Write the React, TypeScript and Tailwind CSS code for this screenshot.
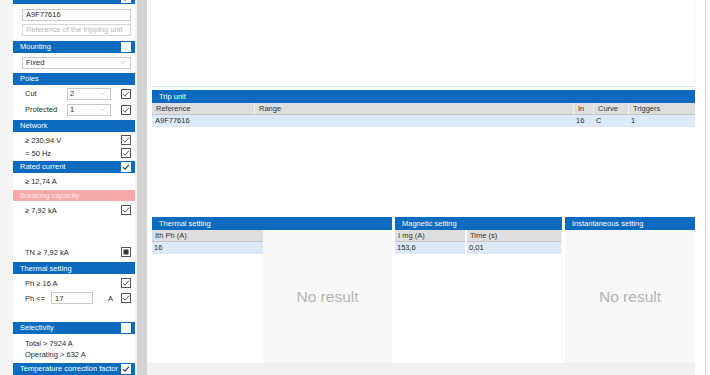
import React from "react";

const FONT = { fontFamily: '"Liberation Sans", Arial, sans-serif' };

function RowCheck({ mark = "check" }: { mark?: "check" | "square" }) {
  return (
    <svg width="10" height="10" viewBox="0 0 10 10" className="shrink-0">
      <rect x="0.5" y="0.5" width="9" height="9" fill="#fff" stroke="#555" />
      {mark === "check" ? (
        <path d="M2 5.2 L4 7.2 L8 2.6" fill="none" stroke="#555" strokeWidth="1" />
      ) : (
        <rect x="2.5" y="2.5" width="5" height="5" fill="#333" />
      )}
    </svg>
  );
}

function HeadCheck({ checked }: { checked?: boolean }) {
  return (
    <svg width="10" height="10" viewBox="0 0 10 10" className="shrink-0">
      <rect x="0" y="0" width="10" height="10" fill="#fff" />
      {checked && <path d="M2 5.2 L4 7.2 L8 2.6" fill="none" stroke="#333" strokeWidth="1.1" />}
    </svg>
  );
}

function Header({
  title,
  check,
  pink,
  className = "",
}: {
  title: string;
  check?: "on" | "off";
  pink?: boolean;
  className?: string;
}) {
  return (
    <div
      className={
        "h-[12px] flex items-center justify-between pl-[7px] pr-[4px] text-[7.5px] leading-none " +
        (pink ? "bg-[#f6a9a9] text-[#fde8e8] " : "bg-[#0b6cbf] text-white ") +
        className
      }
    >
      <span>{title}</span>
      {check && <HeadCheck checked={check === "on"} />}
    </div>
  );
}

function Row({
  children,
  check,
  className = "",
}: {
  children: React.ReactNode;
  check?: "check" | "square";
  className?: string;
}) {
  return (
    <div className={"h-[12px] flex items-center justify-between pl-[12px] pr-[4px] text-[7.5px] text-[#2a2a2a] " + className}>
      <span>{children}</span>
      {check && <RowCheck mark={check} />}
    </div>
  );
}

function Chevron() {
  return (
    <svg width="5" height="3" viewBox="0 0 5 3" className="shrink-0">
      <path d="M0.5 0.5 L2.5 2.5 L4.5 0.5" fill="none" stroke="#bbb" strokeWidth="0.8" />
    </svg>
  );
}

function SelectRow({ label, value }: { label: string; value: string }) {
  return (
    <div className="h-[12px] flex items-center pl-[12px] pr-[4px] text-[7.5px] text-[#2a2a2a]">
      <span className="w-[42px]">{label}</span>
      <div className="w-[44px] h-[12px] border border-[#c9c9c9] bg-white flex items-center justify-between pl-[2px] pr-[5px]">
        <span>{value}</span>
        <Chevron />
      </div>
      <div className="flex-1" />
      <RowCheck />
    </div>
  );
}

function Sidebar() {
  return (
    <div className="w-[137px] h-full bg-[#f4f4f4] pl-[13px] pr-[2px] overflow-hidden">
      <div className="w-[122px] h-full bg-white flex flex-col">
        <Header title="Reference" check="on" className="-mt-[8px]" />
        <div className="mt-[5px] ml-[9px] w-[109px] h-[12px] border border-[#c9c9c9] flex items-center pl-[3px] text-[7.5px] text-[#2a2a2a]">
          A9F77616
        </div>
        <div className="mt-[3px] ml-[9px] w-[109px] h-[12px] border border-[#d6d6d6] flex items-center pl-[3px] text-[7.5px] text-[#b8b8b8]">
          Reference of the tripping unit
        </div>
        <Header title="Mounting" check="off" className="mt-[5px]" />
        <div className="mt-[4px] ml-[9px] w-[109px] h-[12px] border border-[#c9c9c9] flex items-center justify-between pl-[3px] pr-[5px] text-[7.5px] text-[#2a2a2a]">
          <span>Fixed</span>
          <Chevron />
        </div>
        <Header title="Poles" className="mt-[4px]" />
        <div className="mt-[3px]">
          <SelectRow label="Cut" value="2" />
        </div>
        <div className="mt-[4px]">
          <SelectRow label="Protected" value="1" />
        </div>
        <Header title="Network" className="mt-[4px]" />
        <Row check="check" className="mt-[2px] h-[13px]">≥ 230,94 V</Row>
        <Row check="check" className="h-[13px]">= 50 Hz</Row>
        <Header title="Rated current" check="on" className="mt-[1px]" />
        <Row className="mt-[3px]">≥ 12,74 A</Row>
        <Header title="Breaking capacity" pink className="mt-[2px]" />
        <Row check="check" className="mt-[3px]">≥ 7,92 kA</Row>
        <Row check="square" className="mt-[30px]">TN ≥ 7,92 kA</Row>
        <Header title="Thermal setting" className="mt-[4px]" />
        <Row check="check" className="mt-[3px]">Ph ≥ 16 A</Row>
        <div className="mt-[3px] h-[12px] flex items-center pl-[12px] pr-[4px] text-[7.5px] text-[#2a2a2a]">
          <span className="w-[26px]">Ph &lt;=</span>
          <div className="w-[42px] h-[12px] border border-[#c9c9c9] flex items-center pl-[3px]">17</div>
          <span className="ml-[15px]">A</span>
          <div className="flex-1" />
          <RowCheck />
        </div>
        <Header title="Selectivity" check="off" className="mt-[18px]" />
        <Row className="mt-[4px]">Total &gt; 7924 A</Row>
        <Row className="-mt-[1px]">Operating &gt; 632 A</Row>
        <Header title="Temperature correction factor" check="on" className="mt-[2px]" />
      </div>
    </div>
  );
}

function PanelHeader({ title }: { title: string }) {
  return (
    <div className="h-[13px] bg-[#0b6cbf] text-white text-[7.5px] flex items-center pl-[7px]">{title}</div>
  );
}

function ColHead({ children, className = "" }: { children: React.ReactNode; className?: string }) {
  return (
    <div className={"h-[12px] bg-[#dedede] border-b border-[#c4c4c4] flex items-center pl-[3px] text-[7.5px] text-[#333] " + className}>
      {children}
    </div>
  );
}

function DataCell({ children, className = "" }: { children: React.ReactNode; className?: string }) {
  return (
    <div className={"h-[12px] bg-[#dde9f8] flex items-center pl-[2px] text-[7.5px] text-[#2a2a2a] " + className}>
      {children}
    </div>
  );
}

function Main() {
  const cols = [
    { w: "w-[102px]", h: "Reference", d: "A9F77616" },
    { w: "w-[319px]", h: "Range", d: "" },
    { w: "w-[20px]", h: "In", d: "16" },
    { w: "w-[35px]", h: "Curve", d: "C" },
    { w: "flex-1", h: "Triggers", d: "1" },
  ];
  return (
    <div className="flex-1 h-full flex bg-white">
      <div className="w-[548px] h-full flex flex-col">
        <div className="h-[363px] flex flex-col pl-[5px]">
          <div className="h-[87px] -ml-[2px] border border-t-0 border-[#f3f3f3] border-b-[#c8f1f6]" />
          <div className="mt-[3px]">
            <PanelHeader title="Trip unit" />
            <div className="flex">
              {cols.map((c, i) => (
                <div key={i} className={c.w + " flex flex-col"}>
                  <ColHead className={"pl-[4px] " + (i > 0 ? "border-l border-l-[#f2f2f2]" : "")}>{c.h}</ColHead>
                  <DataCell className="pl-[3px]">{c.d}</DataCell>
                </div>
              ))}
            </div>
          </div>
          <div className="mt-[90px] flex-1 flex gap-[3px]">
            <div className="w-[240px] flex flex-col">
              <PanelHeader title="Thermal setting" />
              <div className="flex-1 flex">
                <div className="w-[111px] flex flex-col">
                  <ColHead>Ith Ph (A)</ColHead>
                  <DataCell>16</DataCell>
                </div>
                <div className="flex-1 bg-[#f8f8f8] flex items-center justify-center text-[15.5px] text-[#b4b4b4]">
                  No result
                </div>
              </div>
            </div>
            <div className="w-[167px] flex flex-col">
              <PanelHeader title="Magnetic setting" />
              <div className="flex-1 flex">
                <div className="w-[70px] flex flex-col">
                  <ColHead>I mg (A)</ColHead>
                  <DataCell>153,6</DataCell>
                </div>
                <div className="w-[2px]" />
                <div className="w-[94px] flex flex-col">
                  <ColHead>Time (s)</ColHead>
                  <DataCell>0,01</DataCell>
                </div>
                <div className="flex-1 bg-[#f8f8f8]" />
              </div>
            </div>
            <div className="flex-1 flex flex-col">
              <PanelHeader title="Instantaneous setting" />
              <div className="flex-1 bg-[#f8f8f8] flex items-center justify-center text-[15.5px] text-[#b4b4b4]">
                No result
              </div>
            </div>
          </div>
        </div>
        <div className="flex-1 bg-[#f1f1f1]" />
      </div>
      <div className="flex-1 h-full flex bg-white">
        <div className="w-[10px]" />
        <div className="w-[1px] bg-[#d4d4d4]" />
        <div className="flex-1" />
      </div>
    </div>
  );
}

export default function App() {
  return (
    <div className="w-[710px] h-[375px] flex overflow-hidden bg-white" style={FONT}>
      <Sidebar />
      <div className="w-[10px] h-full bg-[#d2d2d2]" />
      <Main />
    </div>
  );
}
